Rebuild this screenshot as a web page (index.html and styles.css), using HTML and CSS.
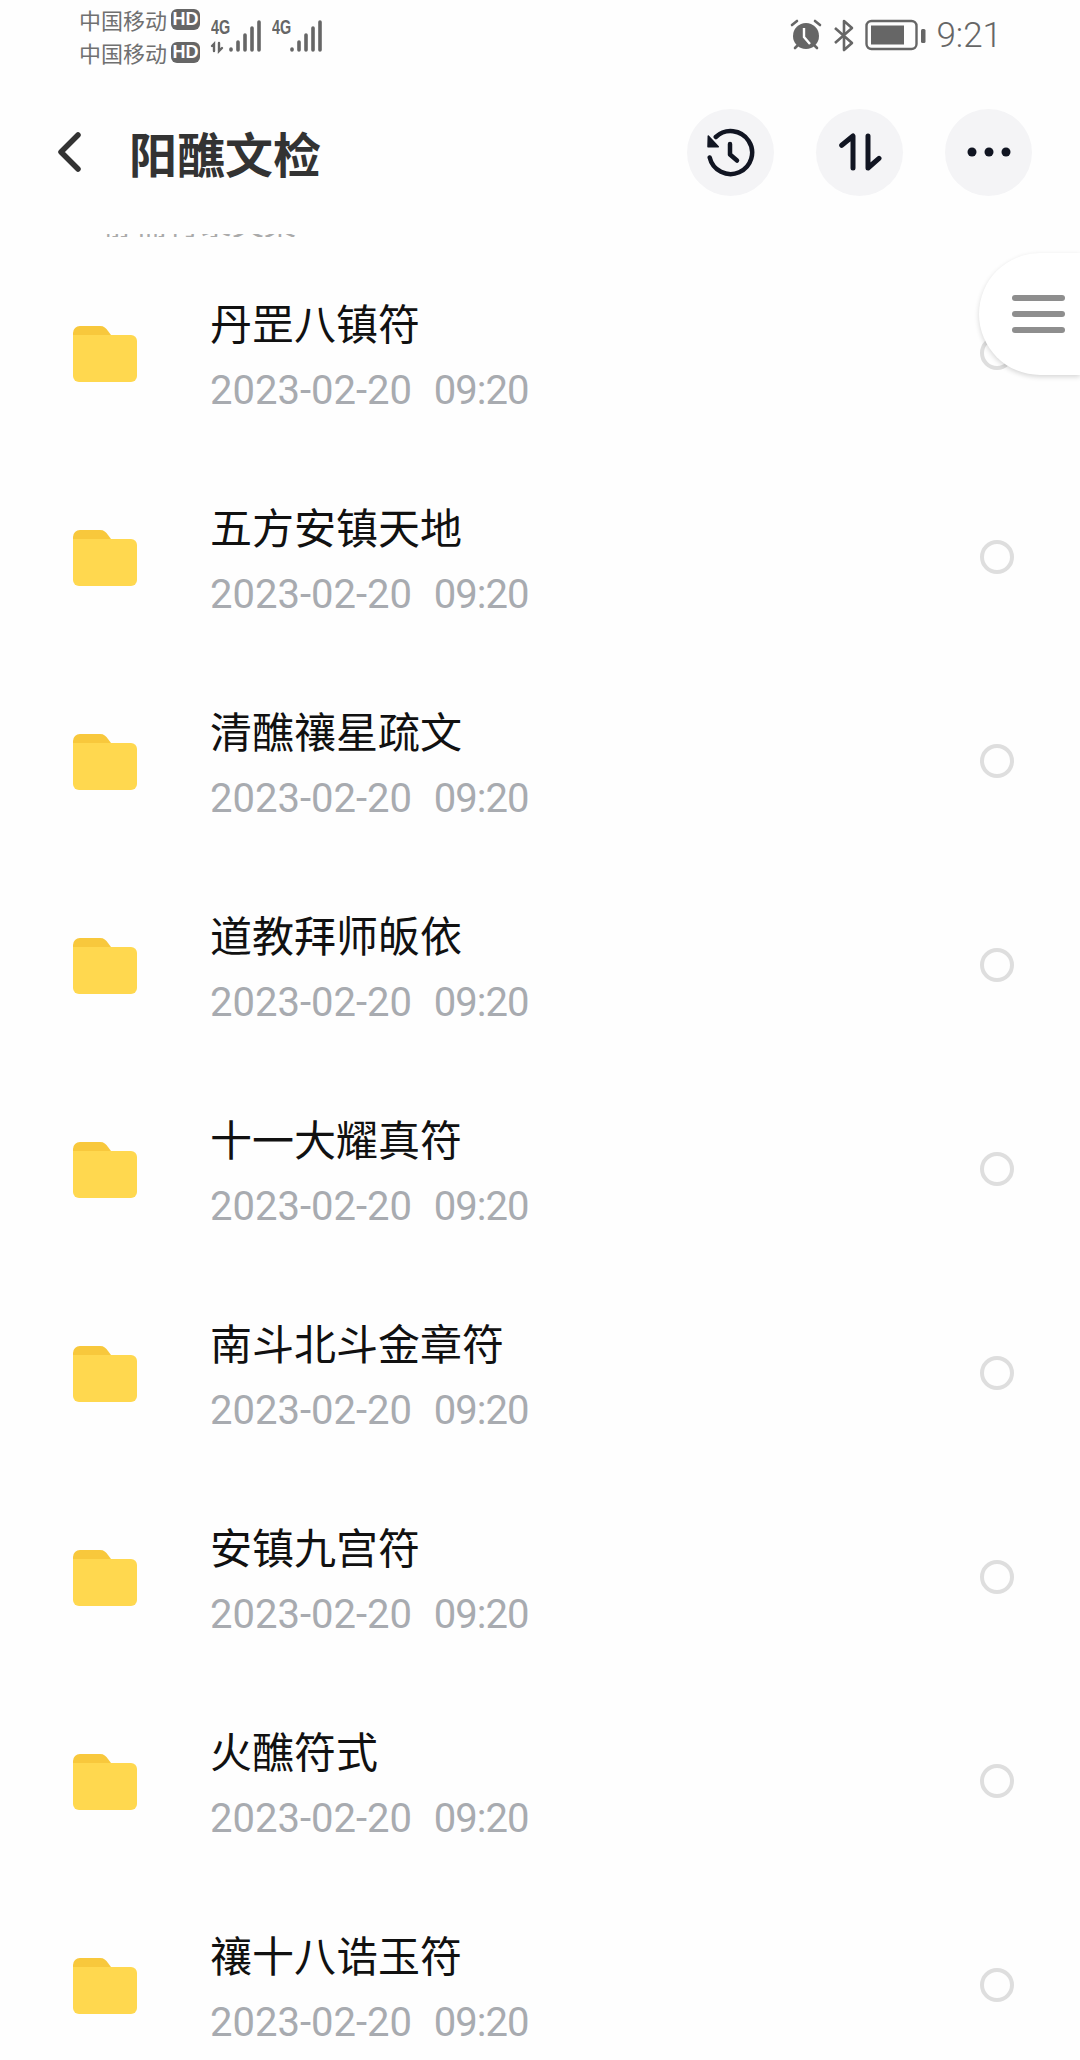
FILE: index.html
```html
<!DOCTYPE html>
<html lang="zh-CN">
<head>
    <meta charset="UTF-8">
    <title>阳醮文检</title>
    <link rel="stylesheet" href="styles.css">
</head>
<body>
    <div class="statusbar">
        <div class="carriers">
            <div class="carrier">中国移动<span class="hd">HD</span></div>
            <div class="carrier">中国移动<span class="hd">HD</span></div>
        </div>
        <div class="signal">
            <span class="net">4G</span>
            <svg width="52" height="36" viewBox="0 0 52 36"><g fill="none" stroke="#666" stroke-width="3.6" stroke-linecap="round"><path d="M21 32v-1M28 32v-8M35 32V17M42 32V10M49 32V4"/><path d="M4 33v-7l-2 2M9 25v8l3-3" stroke-width="2.4"/></g></svg>
        </div>
        <div class="signal">
            <span class="net">4G</span>
            <svg width="52" height="36" viewBox="0 0 52 36"><g fill="none" stroke="#666" stroke-width="3.6" stroke-linecap="round"><path d="M21 32v-1M28 32v-8M35 32V17M42 32V10M49 32V4"/></g></svg>
        </div>
        <div class="status-right">
            <svg width="34" height="34" viewBox="0 0 34 34"><circle cx="17" cy="18" r="13" fill="#666"/><path d="M15 10v9l6 7" fill="none" stroke="#fff" stroke-width="2.4"/><path d="M3 7l5-4M31 7l-5-4M6 30l2-2M28 30l-2-2" stroke="#666" stroke-width="2.6" stroke-linecap="round"/></svg>
            <svg width="24" height="34" viewBox="0 0 24 34"><path d="M3 10l17 15-8 7V3l8 7L3 25" fill="none" stroke="#666" stroke-width="2.6" stroke-linejoin="round"/></svg>
            <svg width="62" height="32" viewBox="0 0 62 32"><rect x="1.5" y="2" width="50" height="28" rx="5" fill="none" stroke="#666" stroke-width="2.4"/><rect x="6" y="6.5" width="33" height="19" fill="#666"/><rect x="56" y="10" width="4.5" height="14" rx="1.5" fill="#666"/></svg>
            <span class="clock">9:21</span>
        </div>
    </div>

    <header class="topbar">
        <svg class="back" width="30" height="44" viewBox="0 0 30 44"><path d="M21 5L4 22l17 17" fill="none" stroke="#333" stroke-width="5.5" stroke-linecap="round" stroke-linejoin="round"/></svg>
        <h1>阳醮文检</h1>
        <div class="actions">
            <button class="action">
                <svg width="52" height="52" viewBox="0 0 52 52"><path d="M10.8 11A21.5 21.5 0 1 1 4.7 31.5" fill="none" stroke="#111522" stroke-width="4.5" stroke-linecap="round"/><path d="M3.3 10L3 20.7h10.3z" fill="#111522" stroke="#111522" stroke-width="1.5" stroke-linejoin="round"/><path d="M25 18v10.5l7 6" fill="none" stroke="#111522" stroke-width="4.5" stroke-linecap="round" stroke-linejoin="round"/></svg>
            </button>
            <button class="action">
                <svg width="44" height="44" viewBox="0 0 44 44"><path d="M3.7 15.3L15 6v32M30 6v32l11-9.7" fill="none" stroke="#111522" stroke-width="5" stroke-linecap="round" stroke-linejoin="round"/></svg>
            </button>
            <button class="action">
                <svg width="44" height="12" viewBox="0 0 44 12"><circle cx="5" cy="6" r="4.5" fill="#111522"/><circle cx="22" cy="6" r="4.5" fill="#111522"/><circle cx="39" cy="6" r="4.5" fill="#111522"/></svg>
            </button>
        </div>
    </header>

    <main class="files">
        <div class="cut-row"><span>静斋符箓文集</span></div>

        <div class="file">
            <svg class="folder" width="66" height="58" viewBox="0 0 66 58"><use href="#folder"/></svg>
            <div class="file-text"><div class="name">丹罡八镇符</div><div class="date">2023-02-20&nbsp; <span class="time">09:20</span></div></div>
            <span class="radio"></span>
        </div>
        <div class="file">
            <svg class="folder" width="66" height="58" viewBox="0 0 66 58"><use href="#folder"/></svg>
            <div class="file-text"><div class="name">五方安镇天地</div><div class="date">2023-02-20&nbsp; <span class="time">09:20</span></div></div>
            <span class="radio"></span>
        </div>
        <div class="file">
            <svg class="folder" width="66" height="58" viewBox="0 0 66 58"><use href="#folder"/></svg>
            <div class="file-text"><div class="name">清醮禳星疏文</div><div class="date">2023-02-20&nbsp; <span class="time">09:20</span></div></div>
            <span class="radio"></span>
        </div>
        <div class="file">
            <svg class="folder" width="66" height="58" viewBox="0 0 66 58"><use href="#folder"/></svg>
            <div class="file-text"><div class="name">道教拜师皈依</div><div class="date">2023-02-20&nbsp; <span class="time">09:20</span></div></div>
            <span class="radio"></span>
        </div>
        <div class="file">
            <svg class="folder" width="66" height="58" viewBox="0 0 66 58"><use href="#folder"/></svg>
            <div class="file-text"><div class="name">十一大耀真符</div><div class="date">2023-02-20&nbsp; <span class="time">09:20</span></div></div>
            <span class="radio"></span>
        </div>
        <div class="file">
            <svg class="folder" width="66" height="58" viewBox="0 0 66 58"><use href="#folder"/></svg>
            <div class="file-text"><div class="name">南斗北斗金章符</div><div class="date">2023-02-20&nbsp; <span class="time">09:20</span></div></div>
            <span class="radio"></span>
        </div>
        <div class="file">
            <svg class="folder" width="66" height="58" viewBox="0 0 66 58"><use href="#folder"/></svg>
            <div class="file-text"><div class="name">安镇九宫符</div><div class="date">2023-02-20&nbsp; <span class="time">09:20</span></div></div>
            <span class="radio"></span>
        </div>
        <div class="file">
            <svg class="folder" width="66" height="58" viewBox="0 0 66 58"><use href="#folder"/></svg>
            <div class="file-text"><div class="name">火醮符式</div><div class="date">2023-02-20&nbsp; <span class="time">09:20</span></div></div>
            <span class="radio"></span>
        </div>
        <div class="file">
            <svg class="folder" width="66" height="58" viewBox="0 0 66 58"><use href="#folder"/></svg>
            <div class="file-text"><div class="name">禳十八诰玉符</div><div class="date">2023-02-20&nbsp; <span class="time">09:20</span></div></div>
            <span class="radio"></span>
        </div>
    </main>

    <div class="float-menu"><span></span><span></span><span></span></div>

    <svg width="0" height="0" class="defs">
        <symbol id="folder" viewBox="0 0 66 58">
            <path d="M1 12V8a7 7 0 0 1 7-7h20c4 0 6 2 8 5l3 4v2z" fill="#f8c83c"/>
            <path d="M1 10h58a6 6 0 0 1 6 6v35a6 6 0 0 1-6 6H7a6 6 0 0 1-6-6z" fill="#ffd84f"/>
        </symbol>
    </svg>
</body>
</html>
```

FILE: styles.css
```css
* {
    margin: 0;
    padding: 0;
    box-sizing: border-box;
}
html, body {
    height: 100%;
}
body {
    width: 1080px;
    height: 2060px;
    overflow: hidden;
    position: relative;
    background: #fefefe;
    font-family: "Noto Sans CJK SC", "Noto Sans", sans-serif;
}
.defs {
    display: block;
}

/* status bar */
.statusbar {
    height: 70px;
    display: flex;
    padding-left: 79px;
    padding-right: 78px;
    color: #666;
}
.carriers {
    width: 131px;
    padding-top: 3px;
}
.carrier {
    display: flex;
    align-items: center;
    height: 33px;
    font-size: 22px;
    line-height: 33px;
    color: #707070;
}
.hd {
    margin-left: 4px;
    width: 29px;
    height: 21px;
    border-radius: 6px;
    background: #666;
    color: #fff;
    font: bold 18px/21px "Liberation Sans", sans-serif;
    text-align: center;
}
.signal {
    position: relative;
    width: 61px;
    height: 56px;
}
.net {
    position: absolute;
    left: 1px;
    top: 17px;
    font: bold 20px/20px "Liberation Sans", sans-serif;
    transform: scaleX(0.72);
    transform-origin: left;
    color: #666;
}
.signal svg {
    position: absolute;
    left: 0;
    top: 18px;
}
.status-right {
    margin-left: auto;
    display: flex;
    align-items: center;
    gap: 9px;
    height: 70px;
}
.clock {
    font: 300 35px "Roboto", sans-serif;
    color: #666;
}

/* title bar */
.topbar {
    height: 164px;
    display: flex;
    align-items: center;
    padding: 0 48px 0 57px;
}
.back {
    flex: none;
}
h1 {
    margin-left: 42px;
    font-size: 48px;
    font-weight: 700;
    color: #333;
}
.actions {
    margin-left: auto;
    display: flex;
    gap: 42px;
}
.action {
    width: 87px;
    height: 87px;
    border: none;
    border-radius: 50%;
    background: #f4f4f6;
    display: flex;
    align-items: center;
    justify-content: center;
}

/* file list */
.files {
    overflow: hidden;
}
.cut-row {
    height: 3px;
    margin-left: 104px;
    margin-bottom: 12px;
    overflow: hidden;
    display: flex;
    align-items: flex-end;
}
.cut-row span {
    font-size: 32px;
    line-height: 32px;
    color: #aaa;
}
.file {
    height: 204px;
    display: flex;
    align-items: center;
    padding-left: 72px;
    padding-right: 66px;
}
.folder {
    flex: none;
    margin-top: 6px;
}
.file-text {
    margin-left: 72px;
    margin-top: 6px;
}
.name {
    font-size: 42px;
    line-height: 60px;
    color: #111;
}
.date {
    margin-top: 14px;
    font: 40px/50px "Roboto", sans-serif;
    word-spacing: 1px;
    color: #a8abb0;
}
.time {
    letter-spacing: -1px;
}
.radio {
    margin-left: auto;
    width: 34px;
    height: 34px;
    border: 4px solid #dedede;
    border-radius: 50%;
    margin-top: 4px;
}

/* floating handle on the right edge */
.float-menu {
    position: absolute;
    right: 0;
    top: 253px;
    width: 101px;
    height: 122px;
    border-radius: 61px 0 0 61px;
    background: #fff;
    box-shadow: 0 2px 5px rgba(0, 0, 0, 0.16);
    display: flex;
    flex-direction: column;
    justify-content: center;
    gap: 10px;
    padding-left: 33px;
}
.float-menu span {
    width: 53px;
    height: 6px;
    border-radius: 3px;
    background: #8e8e8e;
}
```
